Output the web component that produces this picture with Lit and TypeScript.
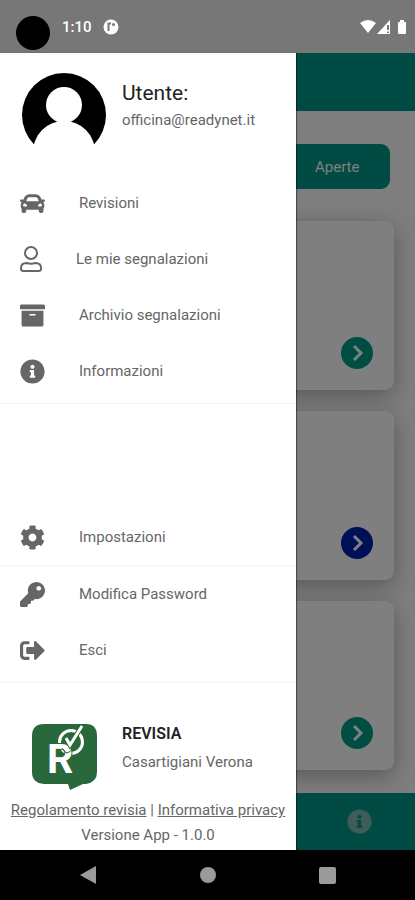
import { LitElement, html, css, svg } from "lit";
import { customElement } from "lit/decorators.js";

const icons = {
  car: svg`<path d="M499.99 176h-59.87l-16.64-41.6C406.38 91.63 365.57 64 319.5 64h-127c-46.06 0-86.88 27.63-103.99 70.4L71.87 176H12.01C4.2 176-1.53 183.34.37 190.91l6 24C7.7 220.25 12.5 224 18.01 224h20.07C24.65 235.73 16 252.78 16 272v48c0 16.12 6.16 30.67 16 41.93V416c0 17.67 14.33 32 32 32h32c17.67 0 32-14.33 32-32v-32h256v32c0 17.67 14.33 32 32 32h32c17.67 0 32-14.33 32-32v-54.07c9.84-11.25 16-25.8 16-41.93v-48c0-19.22-8.65-36.27-22.07-48H494c5.51 0 10.31-3.75 11.64-9.09l6-24c1.89-7.57-3.84-14.91-11.65-14.91zm-352.06-17.83c7.29-18.22 24.94-30.17 44.57-30.17h127c19.63 0 37.28 11.95 44.57 30.17L384 208H128l19.93-49.83zM96 319.8c-19.2 0-32-12.76-32-31.9S76.8 256 96 256s48 28.71 48 47.85-28.8 15.95-48 15.95zm320 0c-19.2 0-48 3.19-48-15.95S396.8 256 416 256s32 12.76 32 31.9-12.8 31.9-32 31.9z"/>`,
  archive: svg`<path d="M32 448c0 17.7 14.3 32 32 32h384c17.7 0 32-14.3 32-32V160H32v288zm160-212c0-6.6 5.4-12 12-12h104c6.6 0 12 5.4 12 12v8c0 6.6-5.4 12-12 12H204c-6.6 0-12-5.4-12-12v-8zM480 32H32C14.3 32 0 46.3 0 64v48c0 8.8 7.2 16 16 16h480c8.8 0 16-7.2 16-16V64c0-17.7-14.3-32-32-32z"/>`,
  info: svg`<path d="M256 8C119.043 8 8 119.083 8 256c0 136.997 111.043 248 248 248s248-111.003 248-248C504 119.083 392.957 8 256 8zm0 110c23.196 0 42 18.804 42 42s-18.804 42-42 42-42-18.804-42-42 18.804-42 42-42zm56 254c0 6.627-5.373 12-12 12h-88c-6.627 0-12-5.373-12-12v-24c0-6.627 5.373-12 12-12h12v-64h-12c-6.627 0-12-5.373-12-12v-24c0-6.627 5.373-12 12-12h64c6.627 0 12 5.373 12 12v100h12c6.627 0 12 5.373 12 12v24z"/>`,
  cog: svg`<path d="M487.4 315.7l-42.6-24.6c4.3-23.2 4.3-47 0-70.2l42.6-24.6c4.9-2.8 7.1-8.6 5.5-14-11.1-35.6-30-67.8-54.7-94.6-3.8-4.1-10-5.1-14.8-2.3L380.8 110c-17.9-15.4-38.5-27.3-60.8-35.1V25.8c0-5.6-3.9-10.5-9.4-11.7-36.7-8.2-74.3-7.8-109.2 0-5.5 1.2-9.4 6.1-9.4 11.7V75c-22.2 7.9-42.8 19.8-60.8 35.1L88.7 85.5c-4.9-2.8-11-1.9-14.8 2.3-24.7 26.7-43.6 58.9-54.7 94.6-1.7 5.4.6 11.2 5.5 14L67.3 221c-4.3 23.2-4.3 47 0 70.2l-42.6 24.6c-4.9 2.8-7.1 8.6-5.5 14 11.1 35.6 30 67.8 54.7 94.6 3.8 4.1 10 5.1 14.8 2.3l42.6-24.6c17.9 15.4 38.5 27.3 60.8 35.1v49.2c0 5.6 3.9 10.5 9.4 11.7 36.7 8.2 74.3 7.8 109.2 0 5.5-1.2 9.4-6.1 9.4-11.7v-49.2c22.2-7.9 42.8-19.8 60.8-35.1l42.6 24.6c4.9 2.8 11 1.9 14.8-2.3 24.7-26.7 43.6-58.9 54.7-94.6 1.5-5.5-.7-11.3-5.6-14.1zM256 336c-44.1 0-80-35.9-80-80s35.9-80 80-80 80 35.9 80 80-35.9 80-80 80z"/>`,
  key: svg`<path d="M512 176.001C512 273.203 433.202 352 336 352c-11.22 0-22.19-1.062-32.827-3.069l-24.012 27.014A23.999 23.999 0 0 1 261.223 384H224v40c0 13.255-10.745 24-24 24h-40v40c0 13.255-10.745 24-24 24H24c-13.255 0-24-10.745-24-24v-78.059c0-6.365 2.529-12.47 7.029-16.971l161.802-161.802C163.108 213.814 160 195.271 160 176 160 78.798 238.797.001 335.999 0 433.488-.001 512 78.511 512 176.001zM336 128c0 26.51 21.49 48 48 48s48-21.49 48-48-21.49-48-48-48-48 21.49-48 48z"/>`,
  exit: svg`<path d="M497 273L329 441c-15 15-41 4.500-41-17v-96H152c-13.3 0-24-10.7-24-24v-96c0-13.3 10.7-24 24-24h136V88c0-21.4 25.9-32 41-17l168 168c9.3 9.4 9.3 24.6 0 34zM192 436v-40c0-6.6-5.4-12-12-12H96c-17.7 0-32-14.3-32-32V160c0-17.7 14.3-32 32-32h84c6.6 0 12-5.4 12-12V76c0-6.6-5.4-12-12-12H96c-53 0-96 43-96 96v192c0 53 43 96 96 96h84c6.6 0 12-5.4 12-12z"/>`,
};

const glyph = (shape: unknown) =>
  html`<svg class="icon" viewBox="0 0 512 512" aria-hidden="true">${shape}</svg>`;

const userGlyph = html`<svg class="icon narrow" viewBox="0 0 22 26" aria-hidden="true">
  <g fill="none" stroke="currentColor" stroke-width="2">
    <circle cx="11" cy="7" r="6" />
    <path d="M6.500 17 Q11 18.500 15.500 17 C19 17 21 19 21 22 V23 Q21 25 18.500 25 H3.500 Q1 25 1 23 V22 C1 19 3 17 6.500 17 Z" />
  </g>
</svg>`;

const row = (icon: unknown, label: string) =>
  html`<li><a class="row" href="#">${icon}<span>${label}</span></a></li>`;

@customElement("app-root")
export class AppRoot extends LitElement {
  static styles = css`
    :host {
      display: grid;
      grid-template-rows: 53px 1fr 50px;
      min-height: 100vh;
      background: #fff;
      font-family: Roboto, "Liberation Sans", sans-serif;
      font-size: 15px;
      line-height: 20px;
      color: #666;
    }
    * { box-sizing: border-box; }
    svg { display: block; flex: none; }
    a { color: inherit; }
    button { font: inherit; border: 0; padding: 0; cursor: pointer; }

    .status {
      display: flex;
      align-items: center;
      padding: 0 8px 0 16px;
      background: #777;
      color: #fff;
    }
    .camera { width: 34px; height: 34px; margin-top: 12px; border-radius: 50%; background: #000; }
    .clock { margin: 0 11px 0 12px; font-weight: 500; }
    .signals { margin-left: auto; }

    .stage { display: grid; grid-template-columns: 100%; }
    .page, .scrim, .drawer { grid-area: 1 / 1; }

    .page { display: flex; flex-direction: column; }
    .topbar { height: 58px; background: #009688; }
    .content {
      flex: 1;
      display: flex;
      flex-direction: column;
      gap: 21px;
      padding: 33px 21px 22px;
      background: #fcfcfc;
    }
    .filter {
      align-self: flex-end;
      width: 180px;
      height: 45px;
      margin: 0 4px 11px 0;
      padding-left: 105px;
      border-radius: 9px;
      background: #009688;
      color: #fff;
      text-align: left;
    }
    .card {
      display: flex;
      align-items: flex-end;
      justify-content: flex-end;
      height: 169px;
      padding: 21px;
      border-radius: 9px;
      background: #fff;
      box-shadow: 0 6px 22px rgba(0, 0, 0, 0.3);
    }
    .go {
      display: grid;
      place-items: center;
      width: 32px;
      height: 32px;
      border-radius: 50%;
      background: #009c86;
      color: #fff;
    }
    .go.blue { background: #0020b0; }
    .tabs {
      display: flex;
      justify-content: flex-end;
      align-items: center;
      height: 57px;
      padding-right: 43px;
      background: #009688;
      color: #80b8b2;
    }
    .tab { background: none; color: inherit; }

    .scrim { background: rgba(0, 0, 0, 0.5); }

    .drawer {
      display: flex;
      flex-direction: column;
      width: 296px;
      max-width: 85%;
      background: #fff;
      box-shadow: 1px 0 1px rgba(0, 0, 0, 0.4);
    }
    .profile {
      display: flex;
      gap: 16px;
      height: 122px;
      padding: 20px 22px;
    }
    .who { padding-top: 6px; }
    .name { margin: 0; font-size: 21px; line-height: 28px; font-weight: 400; color: #222; }
    .mail { margin: 3px 0 0; font-size: 15px; }
    .menu { margin: 0; padding: 0 0 4px; list-style: none; border-bottom: 1px solid #f4f4f4; }
    .menu.single { margin-top: auto; padding: 0; }
    .row {
      display: flex;
      align-items: center;
      gap: 34px;
      height: 56px;
      padding: 0 20px;
      text-decoration: none;
    }
    .icon { width: 25px; height: 25px; fill: currentColor; }
    .narrow { width: 22px; height: 26px; }

    .about { padding: 41px 11px 5px; text-align: center; }
    .brand { display: flex; gap: 24px; padding-left: 21px; text-align: left; }
    .brand h2 { margin: 0 0 8px; font-size: 16px; line-height: 20px; font-weight: 600; color: #222; }
    .brand p, .version { margin: 0; }
    .links { margin: 9px -8px 5px; white-space: nowrap; }

    .system {
      display: flex;
      justify-content: center;
      align-items: center;
      gap: 103px;
      background: #000;
      color: #9b9b9b;
    }
    .system button { background: none; color: inherit; }
  `;

  render() {
    const go = (tone: string) => html`<section class="card">
      <button class="go ${tone}" aria-label="Apri">
        <svg width="16" height="18" viewBox="0 0 16 18" fill="none" stroke="currentColor" stroke-width="3">
          <path d="M5 2 L12 9 L5 16" />
        </svg>
      </button>
    </section>`;

    return html`
      <header class="status">
        <span class="camera"></span>
        <span class="clock">1:10</span>
        <svg width="16" height="16" viewBox="0 0 16 16" aria-hidden="true">
          <circle cx="8" cy="8" r="7.500" fill="#fff" />
          <path d="M5.500 12 V4.500 H8" fill="none" stroke="#777" stroke-width="2" />
          <circle cx="10.500" cy="5.500" r="1.500" fill="#777" />
        </svg>
        <svg class="signals" width="47" height="16" viewBox="0 0 47 16" fill="#fff" aria-hidden="true">
          <path d="M0 4 Q8 -2 16 4 L8 14 Z" />
          <path d="M30 1 V15 H17 Z" />
          <path d="M28 6 V11 M28 12.500 V14" stroke="#777" stroke-width="2" />
          <path d="M40 1 h4 v2 h1 q1 0 1 1 v10 q0 1 -1 1 h-6 q-1 0 -1 -1 v-10 q0 -1 1 -1 h1 z" />
        </svg>
      </header>

      <div class="stage">
        <div class="page">
          <div class="topbar"></div>
          <main class="content">
            <button class="filter">Aperte</button>
            ${go("")} ${go("blue")} ${go("")}
          </main>
          <footer class="tabs">
            <button class="tab" aria-label="Informazioni">${glyph(icons.info)}</button>
          </footer>
        </div>
        <div class="scrim"></div>
        <aside class="drawer">
          <div class="profile">
            <svg width="84" height="71" viewBox="0 0 84 71" aria-hidden="true">
              <circle cx="42" cy="42" r="42" />
              <circle cx="42" cy="32" r="18" fill="#fff" />
              <circle cx="42" cy="79" r="31" fill="#fff" />
            </svg>
            <div class="who">
              <h1 class="name">Utente:</h1>
              <p class="mail">officina@readynet.it</p>
            </div>
          </div>
          <ul class="menu">
            ${row(glyph(icons.car), "Revisioni")}
            ${row(userGlyph, "Le mie segnalazioni")}
            ${row(glyph(icons.archive), "Archivio segnalazioni")}
            ${row(glyph(icons.info), "Informazioni")}
          </ul>
          <ul class="menu single">
            ${row(glyph(icons.cog), "Impostazioni")}
          </ul>
          <ul class="menu">
            ${row(glyph(icons.key), "Modifica Password")}
            ${row(glyph(icons.exit), "Esci")}
          </ul>
          <div class="about">
            <div class="brand">
              <svg width="66" height="67" viewBox="0 0 66 67" aria-hidden="true">
                <path d="M12 0 H54 Q65 0 65 12 V48 Q65 58 54 60 H51 L38 66 L36 60 H12 Q0 59 0 48 V12 Q0 0 12 0 Z" fill="#29683a" />
                <circle cx="39" cy="18" r="11.500" fill="none" stroke="#fff" stroke-width="3" />
                <text x="15" y="49" font-size="41" font-weight="700" font-family="Roboto, sans-serif" fill="#fff" stroke="#29683a" stroke-width="2" paint-order="stroke">R</text>
                <path d="M34 14 L38 21 L50 2" fill="none" stroke="#29683a" stroke-width="5" />
                <path d="M34 14 L38 21 L50 2" fill="none" stroke="#fff" stroke-width="3" />
                <path d="M30 24 L34 29 Q40 28 40 24" fill="none" stroke="#29683a" stroke-width="1" />
              </svg>
              <div>
                <h2>REVISIA</h2>
                <p>Casartigiani Verona</p>
              </div>
            </div>
            <p class="links"><a href="#">Regolamento revisia</a> | <a href="#">Informativa privacy</a></p>
            <p class="version">Versione App - 1.0.0</p>
          </div>
        </aside>
      </div>

      <nav class="system">
        <button aria-label="Indietro">
          <svg width="17" height="18" viewBox="0 0 17 18" fill="currentColor"><path d="M0 9 L16 0 V18 Z" /></svg>
        </button>
        <button aria-label="Home">
          <svg width="16" height="16" viewBox="0 0 16 16" fill="currentColor"><circle cx="8" cy="8" r="8" /></svg>
        </button>
        <button aria-label="Recenti">
          <svg width="17" height="17" viewBox="0 0 17 17" fill="currentColor"><rect width="17" height="17" rx="2" /></svg>
        </button>
      </nav>
    `;
  }
}
